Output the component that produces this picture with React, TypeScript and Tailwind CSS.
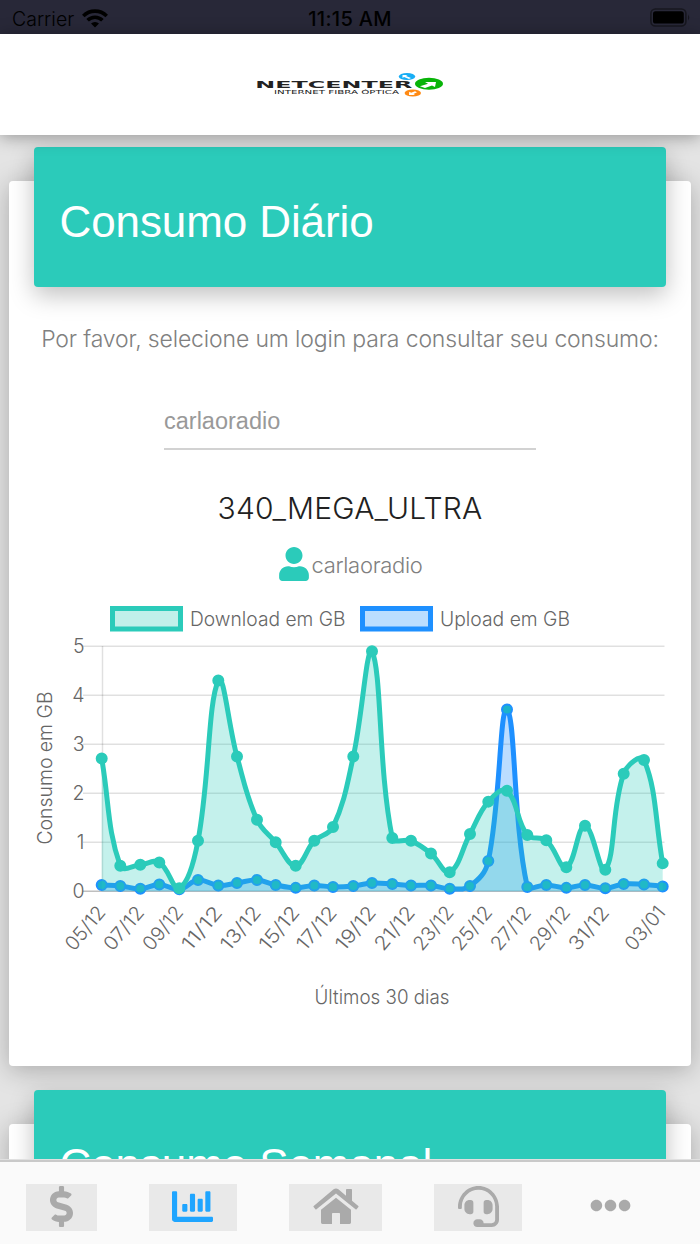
import React from 'react';
import { FaUser, FaDollarSign, FaChartBar, FaHeadset, FaEllipsisH } from 'react-icons/fa';

type Point = [number, number];

const X = [
  101.7, 120.3, 140.3, 159.3, 179.3, 198, 218.3, 237, 257, 275.7, 295.7, 314.3, 333, 353.3, 372, 392.3, 411, 431,
  449.7, 470, 488.3, 507, 527.3, 546.3, 566.3, 585, 605.3, 623.7, 644, 662.7,
];

const DOWNLOAD = [
  2.71, 0.52, 0.54, 0.59, 0.06, 1.03, 4.3, 2.75, 1.46, 1.0, 0.52, 1.03, 1.31, 2.75, 4.9, 1.09, 1.03, 0.77, 0.39, 1.17,
  1.83, 2.05, 1.15, 1.04, 0.49, 1.34, 0.44, 2.4, 2.68, 0.57,
];

const UPLOAD = [
  0.13, 0.11, 0.05, 0.14, 0.04, 0.23, 0.12, 0.17, 0.23, 0.13, 0.07, 0.12, 0.09, 0.11, 0.17, 0.15, 0.12, 0.12, 0.05,
  0.11, 0.62, 3.71, 0.09, 0.13, 0.07, 0.13, 0.06, 0.15, 0.14, 0.1,
];

const TOP = 646.3;
const BOTTOM = 891.3;

const LABELS = [
  '05/12', '07/12', '09/12', '11/12', '13/12', '15/12', '17/12', '19/12', '21/12', '23/12', '25/12', '27/12', '29/12',
  '31/12',
];

const toPoints = (values: number[]): Point[] =>
  values.map((v, i) => [X[i], BOTTOM - (v * (BOTTOM - TOP)) / 5]);

const clamp = (y: number) => Math.min(BOTTOM, Math.max(TOP, y));

function curve(points: Point[], tension = 0.4) {
  const handles = points.map((p, i) => {
    const prev = points[i - 1] ?? p;
    const next = points[i + 1] ?? p;
    const d1 = Math.hypot(p[0] - prev[0], p[1] - prev[1]);
    const d2 = Math.hypot(next[0] - p[0], next[1] - p[1]);
    const a = (tension * d1) / (d1 + d2);
    const b = (tension * d2) / (d1 + d2);
    const dx = next[0] - prev[0];
    const dy = next[1] - prev[1];
    return {
      before: [p[0] - a * dx, clamp(p[1] - a * dy)],
      after: [p[0] + b * dx, clamp(p[1] + b * dy)],
    };
  });
  return points
    .map((p, i) => (i === 0 ? `M${p}` : `C${handles[i - 1].after} ${handles[i].before} ${p}`))
    .join(' ');
}

function Series({ values, stroke, area, dot }: { values: number[]; stroke: string; area: string; dot: string }) {
  const points = toPoints(values);
  const d = curve(points);
  return (
    <g>
      <path d={`${d} L${X[29]} ${BOTTOM} L${X[0]} ${BOTTOM} Z`} fill={area} />
      <path d={d} fill="none" stroke={stroke} strokeWidth="5" />
      {points.map(([x, y]) => (
        <circle key={x} cx={x} cy={y} r="5" fill={dot} stroke={stroke} strokeWidth="2" />
      ))}
    </g>
  );
}

function Chart() {
  return (
    <svg
      width="682"
      height="420"
      viewBox="9 600 682 420"
      className="block font-['Inter','Liberation_Sans',sans-serif] text-[19.5px] font-light"
      fill="#666"
    >
      <rect x="112.5" y="608.5" width="68" height="20.5" fill="#c1f0ea" stroke="#2bcbba" strokeWidth="5" />
      <text x="190" y="625.5" textLength="155.5" lengthAdjust="spacingAndGlyphs">Download em GB</text>
      <rect x="362.5" y="608.5" width="68" height="20.5" fill="#bbdeff" stroke="#1e90ff" strokeWidth="5" />
      <text x="440" y="625.5" textLength="130" lengthAdjust="spacingAndGlyphs">Upload em GB</text>

      {[0, 1, 2, 3, 4, 5].map((n) => {
        const y = BOTTOM - n * 49;
        return (
          <g key={n}>
            <line x1="83" x2="664.5" y1={y} y2={y} stroke="#000" strokeOpacity={n === 0 ? 0.25 : 0.12} strokeWidth="1.5" />
            <text x="84.5" y={y + 7} textAnchor="end">{n}</text>
          </g>
        );
      })}
      <line x1="102.5" x2="102.5" y1="646" y2="891" stroke="#000" strokeOpacity="0.12" strokeWidth="1.5" />

      <Series values={UPLOAD} stroke="#1e90ff" area="rgba(30,144,255,0.3)" dot="#1cb2cb" />
      <Series values={DOWNLOAD} stroke="#2bcbba" area="rgba(43,203,186,0.28)" dot="#2bcbba" />

      {LABELS.map((label, i) => (
        <text
          key={label}
          transform={`translate(${X[i * 2] + 5} ${913}) rotate(-50)`}
          textAnchor="end"
          textLength="51"
          lengthAdjust="spacingAndGlyphs"
        >
          {label}
        </text>
      ))}
      <text transform="translate(666.5 913) rotate(-50)" textAnchor="end" textLength="51" lengthAdjust="spacingAndGlyphs">
        03/01
      </text>

      <text transform="translate(51.5 844.5) rotate(-90)" textLength="153" lengthAdjust="spacingAndGlyphs">
        Consumo em GB
      </text>
      <text x="314.5" y="1004" textLength="135" lengthAdjust="spacingAndGlyphs">Últimos 30 dias</text>
    </svg>
  );
}

function StatusBar() {
  return (
    <div className="grid h-[34px] shrink-0 grid-cols-3 items-center bg-[#282838] pl-3 pr-[9px] font-['Inter',sans-serif] text-[20px] leading-[34px] text-black">
      <div className="flex items-center gap-2">
        <span className="pt-0.5 text-[19.5px] font-light">Carrier</span>
        <svg width="26" height="19" viewBox="0 0 26 19" fill="none" stroke="#000" strokeWidth="3.6">
          <path d="M1.3 7 A16.5 16.5 0 0 1 24.7 7" />
          <path d="M5.6 11.3 A10.5 10.5 0 0 1 20.4 11.3" />
          <path d="M13 18.6 L9 14.6 A5.7 5.7 0 0 1 17 14.6 Z" fill="#000" stroke="none" />
        </svg>
      </div>
      <span className="-ml-[3px] pt-0.5 text-center font-medium tracking-[0.3px]">11:15 AM</span>
      <svg className="justify-self-end" width="41" height="20" viewBox="0 0 41 20">
        <rect x="0.9" y="1" width="35" height="17" rx="4.5" fill="none" stroke="#17171f" strokeWidth="1.6" />
        <rect x="3" y="3.2" width="30.8" height="12.4" rx="2.6" />
        <path d="M38 6.5 Q40.5 9.5 38 12.5 Z" fill="#17171f" />
      </svg>
    </div>
  );
}

function Logo() {
  return (
    <svg width="190" height="26" viewBox="255 71 190 26" className="font-['DejaVu_Sans','Liberation_Sans',sans-serif]">
      <text x="255.3" y="88.4" fontSize="9" fontWeight="bold" fill="#222" textLength="157" lengthAdjust="spacingAndGlyphs">
        NETCENTER
      </text>
      <text x="274" y="94.3" fontSize="5.4" fill="#222" textLength="125" lengthAdjust="spacingAndGlyphs">
        INTERNET FIBRA ÓPTICA
      </text>
      <ellipse cx="407" cy="76.5" rx="8.2" ry="3.6" fill="#18aef5" />
      <path d="M402.5 75 h5 l-1.5 1 5 2 -2 1 -5 -2 -1.5 1 Z" fill="#fff" />
      <ellipse cx="412.8" cy="93" rx="8.2" ry="3.6" fill="#ff8a14" />
      <path d="M409 95 h6 l-1.5 -1 3.5 -1.8 -2 -1 -3.8 1.5 -2 -1 Z" fill="#fff" />
      <ellipse cx="429" cy="83.8" rx="14" ry="6" fill="#08b408" />
      <path d="M420 86.3 l8 -2.6 -3 -1.8 h11 l-1 5 -3 -1.4 -7 2.4 Z" fill="#fff" />
    </svg>
  );
}

function HomeIcon() {
  return (
    <svg width="46" height="37" viewBox="0 0 46 37" fill="currentColor">
      <path d="M0.7 18 L20.6 1.3 Q23 -0.5 25.4 1.3 L33 7.7 V1.7 Q33 0.9 33.8 0.9 H38.2 Q39 0.9 39 1.7 V12.8 L45.3 18 Q45.8 18.5 45.4 19 L43.6 21.2 Q43.1 21.7 42.5 21.2 L23 5.6 L3.5 21.2 Q2.9 21.7 2.4 21.2 L0.6 19 Q0.2 18.5 0.7 18 Z" />
      <path d="M23 9.7 L38 21.8 V34.6 Q38 36 36.6 36 H27 V25.8 Q27 25 26.2 25 H19.8 Q19 25 19 25.8 V36 H9.4 Q8 36 8 34.6 V21.8 Z" />
    </svg>
  );
}

function CardHeader({ title }: { title: string }) {
  return (
    <div className="relative mx-[25px] -mt-[34px] h-[140px] shrink-0 rounded bg-[#2bcbba] pl-[25.5px] pt-[45px] font-['Liberation_Sans',sans-serif] text-[44px] leading-[60px] tracking-[-0.1px] text-white shadow-[0_8px_24px_rgba(0,0,0,0.25)]">
      {title}
    </div>
  );
}

function Tabs() {
  const box = 'flex h-[47px] items-center justify-center bg-[#e9e9e9] pb-[3px]';
  return (
    <nav className="relative z-10 flex h-[84px] shrink-0 items-start border-t-2 border-[#c9c9c9] bg-[#fafafa] pl-[26px] pt-[22px] text-[41px] text-[#aaa] shadow-[0_-1px_0_#e0e0e0]">
      <div className={`${box} w-[71px]`}><FaDollarSign /></div>
      <div className={`${box} ml-[52px] w-[88px] pr-[2px] text-[#1fa5ff]`}><FaChartBar /></div>
      <div className={`${box} ml-[52px] w-[93px]`}><HomeIcon /></div>
      <div className={`${box} ml-[52px] w-[88px]`}><FaHeadset /></div>
      <div className="ml-[68px] flex h-[43px] items-center"><FaEllipsisH /></div>
    </nav>
  );
}

export default function App() {
  return (
    <div className="flex h-[1244px] w-[700px] flex-col overflow-hidden bg-[#e4e4e4]">
      <StatusBar />
      <header className="relative z-10 flex h-[101px] shrink-0 items-start justify-center bg-white pt-[37px] shadow-[0_2px_16px_rgba(0,0,0,0.35)]">
        <Logo />
      </header>

      <main className="min-h-0 flex-1 overflow-hidden px-[9px] pt-[46px] font-['Inter','Liberation_Sans',sans-serif]">
        <section className="flex h-[885px] flex-col rounded bg-white shadow-[0_4px_26px_rgba(0,0,0,0.26)]">
          <CardHeader title="Consumo Diário" />
          <p className="mt-[37px] whitespace-nowrap text-center text-[23px] font-light leading-[30px] tracking-[-0.15px] text-[#808080]">
            Por favor, selecione um login para consultar seu consumo:
          </p>
          <div className="mx-auto mt-[44px] h-[52px] w-[372px] border-b-2 border-[#d2d2d2] pt-[7px] font-['Liberation_Sans',sans-serif] text-[23.5px] leading-[32px] text-[#999]">
            carlaoradio
          </div>
          <h2 className="mt-[38px] text-center text-[30px] font-light leading-[40px] tracking-[0.2px] text-[#212121]">
            340_MEGA_ULTRA
          </h2>
          <div className="mt-[18px] flex h-[36px] items-center justify-center text-[22px] font-light text-[#808080]">
            <FaUser className="text-[34px] text-[#2bcbba]" />
            <span className="pt-0.5 tracking-[-0.3px]">carlaoradio</span>
          </div>
          <div className="mt-[18px]">
            <Chart />
          </div>
        </section>

        <section className="mt-[58px] flex h-[885px] flex-col rounded bg-white shadow-[0_4px_26px_rgba(0,0,0,0.26)]">
          <CardHeader title="Consumo Semanal" />
        </section>
      </main>

      <Tabs />
    </div>
  );
}
